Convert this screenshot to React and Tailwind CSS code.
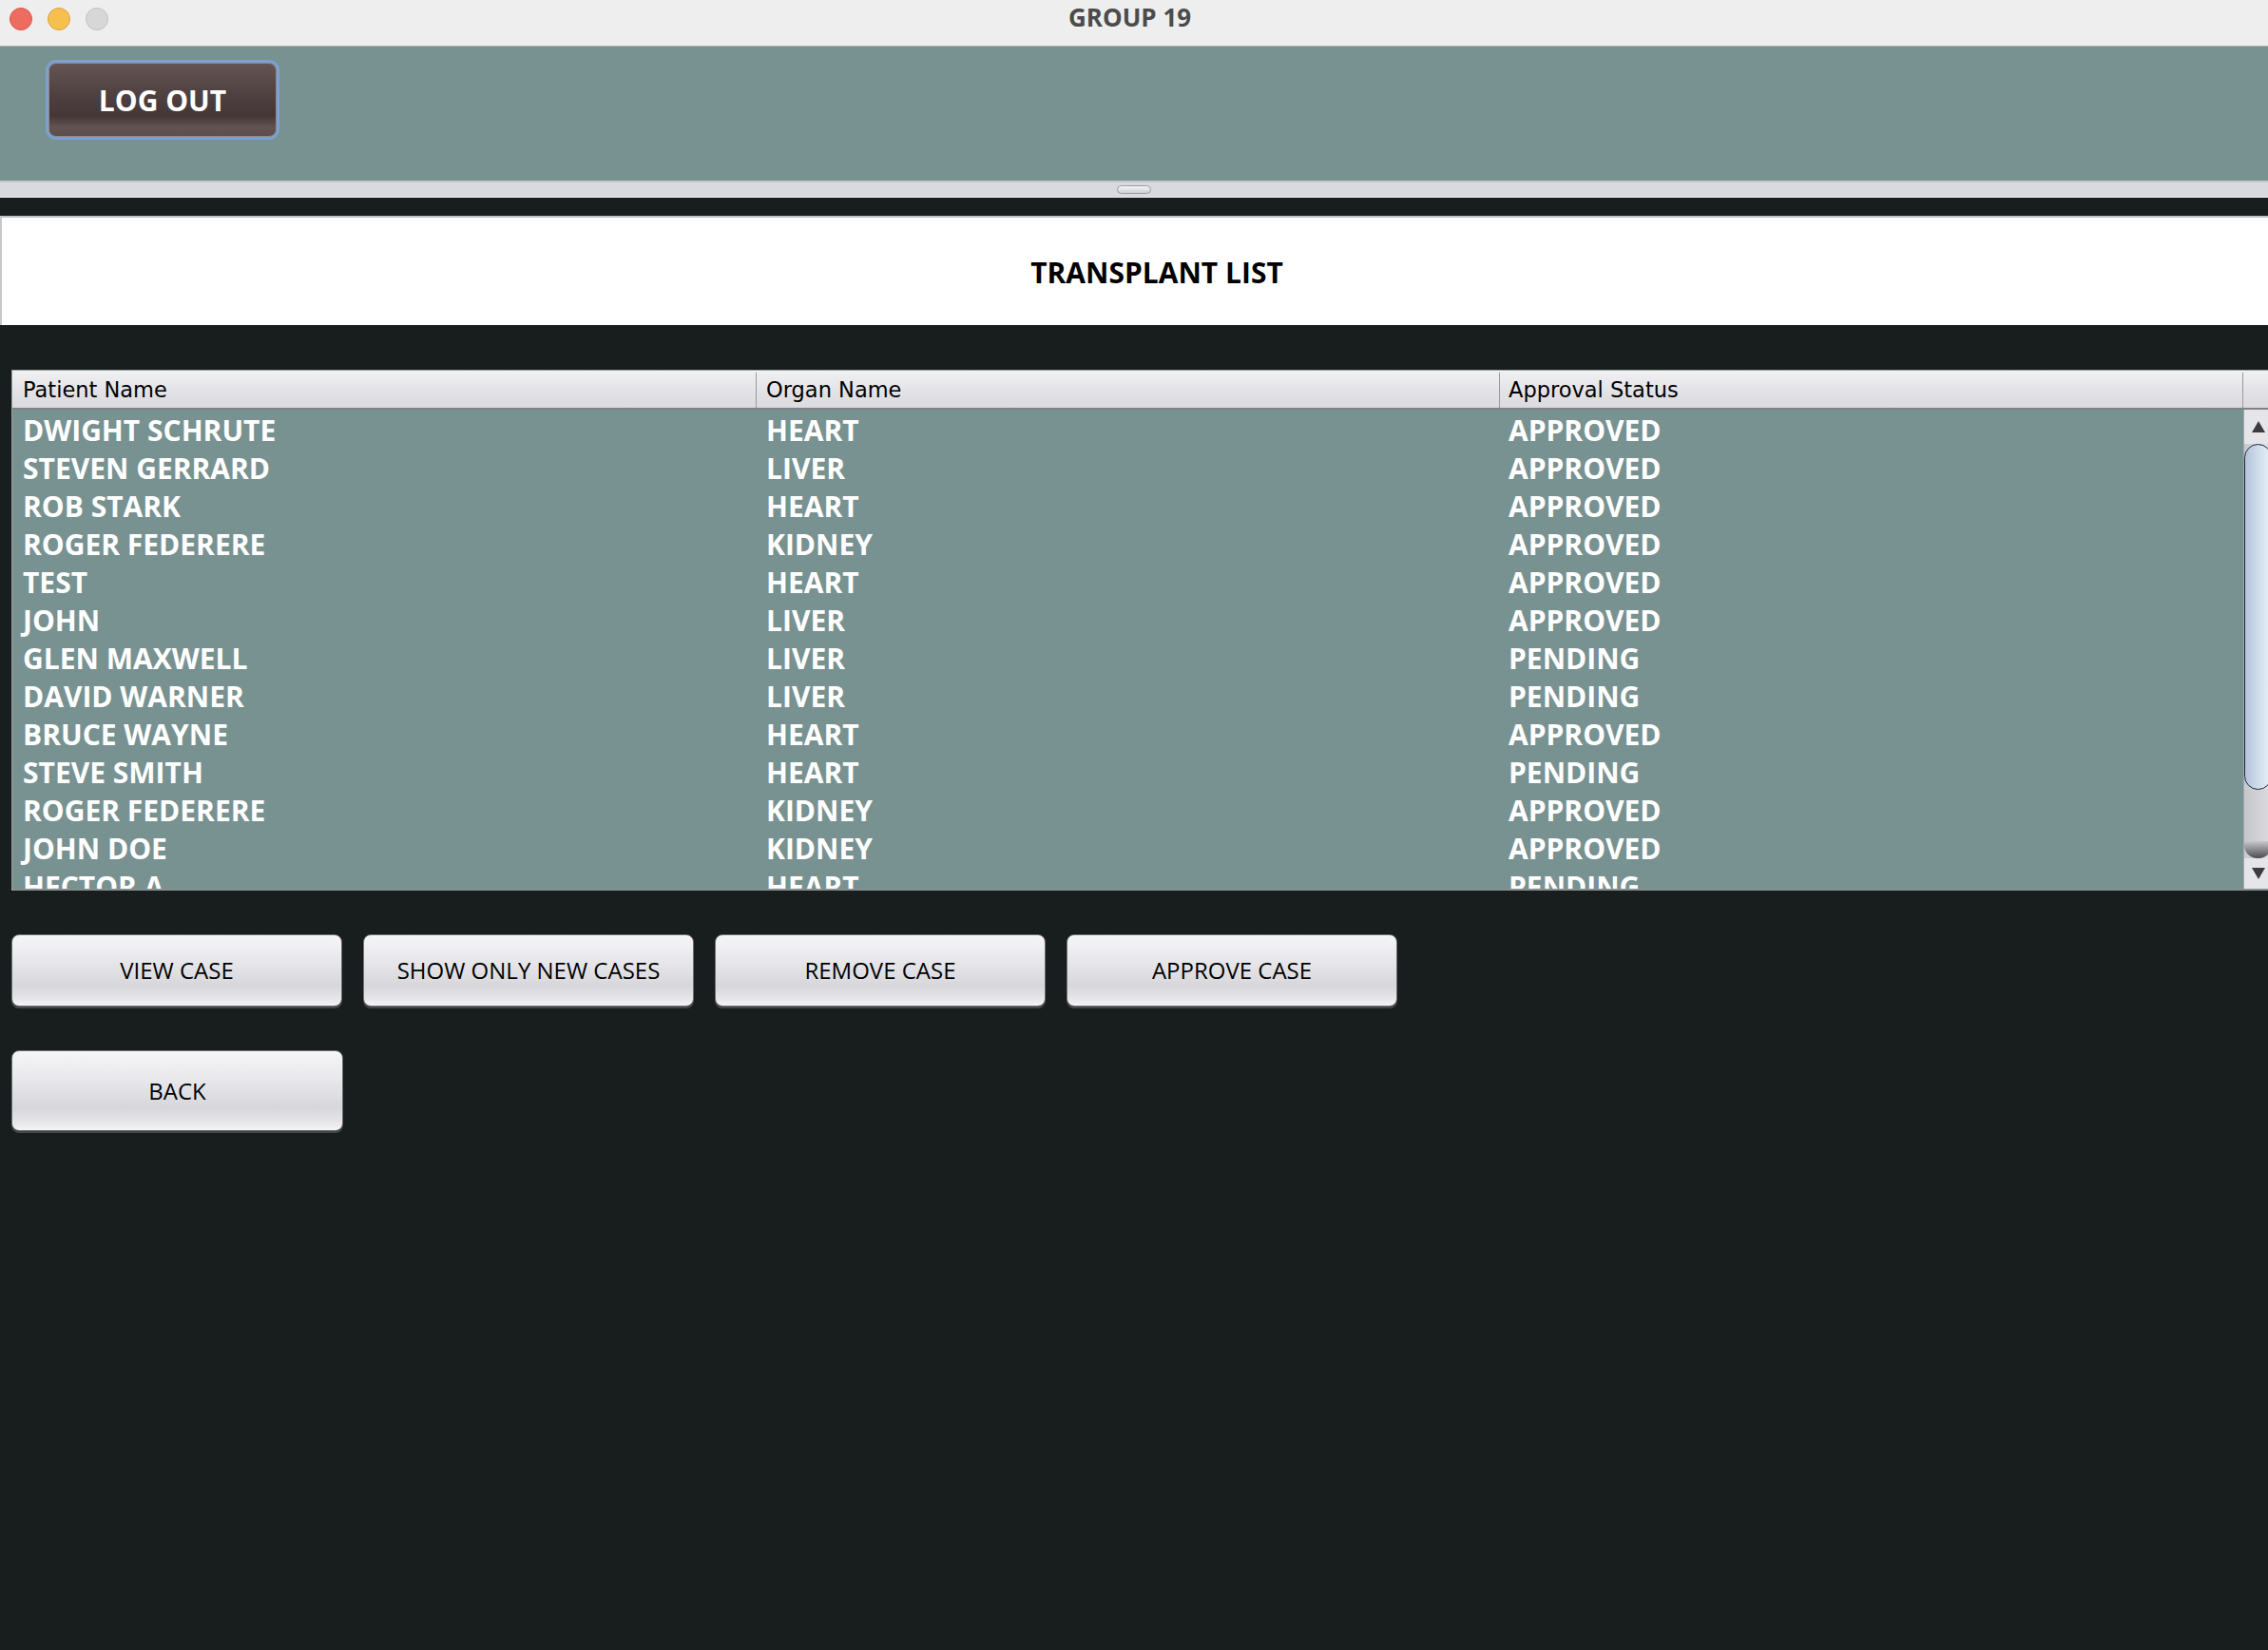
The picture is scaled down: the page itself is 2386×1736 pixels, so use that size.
import React from 'react';

const rows = [
  ['DWIGHT SCHRUTE', 'HEART', 'APPROVED'],
  ['STEVEN GERRARD', 'LIVER', 'APPROVED'],
  ['ROB STARK', 'HEART', 'APPROVED'],
  ['ROGER FEDERERE', 'KIDNEY', 'APPROVED'],
  ['TEST', 'HEART', 'APPROVED'],
  ['JOHN', 'LIVER', 'APPROVED'],
  ['GLEN MAXWELL', 'LIVER', 'PENDING'],
  ['DAVID WARNER', 'LIVER', 'PENDING'],
  ['BRUCE WAYNE', 'HEART', 'APPROVED'],
  ['STEVE SMITH', 'HEART', 'PENDING'],
  ['ROGER FEDERERE', 'KIDNEY', 'APPROVED'],
  ['JOHN DOE', 'KIDNEY', 'APPROVED'],
  ['HECTOR A', 'HEART', 'PENDING'],
];

const sans = "font-['Open_Sans',sans-serif]";

function AquaButton({ label, tall }) {
  return (
    <button
      className={`${tall ? 'h-[85px] w-[349px]' : 'h-[76px] w-[348px]'} rounded-[8px] border border-[#6c7073] bg-[linear-gradient(to_bottom,#f6f6f8_0%,#e6e6ea_40%,#d7d7db_72%,#e4e4e8_88%,#f4f4f6_100%)] shadow-[0_2px_0_#44494b] text-[24px] text-black ${sans} flex items-center justify-center`}
    >
      {label}
    </button>
  );
}

function Scrollbar() {
  return (
    <div className="w-[30px] shrink-0 border-l border-[#a4a8ac] bg-[linear-gradient(to_right,#c9c9cd,#e4e4e8)] flex flex-col">
      <div className="h-[36px] flex items-center justify-center bg-[#e6e6ea]">
        <svg width="14" height="12" viewBox="0 0 14 12">
          <polygon points="7,0 14,12 0,12" fill="#3c3c3c" />
        </svg>
      </div>
      <div className="h-[364px] rounded-[15px] border-[1.5px] border-[#1c2a3e] bg-[linear-gradient(to_right,#b3c4da,#c9d8e8_40%,#e8f1fa)]" />
      <div className="flex-1 flex flex-col">
        <div className="flex-1 bg-[linear-gradient(to_right,#c6c6ca,#dcdce0)]" />
        <div className="h-[18px] rounded-b-[14px] bg-[linear-gradient(to_bottom,#c8c8cc,#4c4c50)]" />
      </div>
      <div className="h-[32px] flex items-center justify-center bg-[#e6e6ea]">
        <svg width="14" height="12" viewBox="0 0 14 12">
          <polygon points="0,0 14,0 7,12" fill="#3c3c3c" />
        </svg>
      </div>
    </div>
  );
}

export default function App() {
  return (
    <div className="w-[2386px] h-[1736px] overflow-hidden bg-[#181d1d] flex flex-col">
      {/* window title bar */}
      <div className="h-[49px] shrink-0 bg-[#eeeeee] border-b border-[#b2b4b6] flex items-start">
        <div className="mt-[8px] ml-[10px] flex gap-[16px]">
          <span className="w-[24px] h-[24px] rounded-full bg-[#ee6b5f] border border-[#d6564b]" />
          <span className="w-[24px] h-[24px] rounded-full bg-[#f6c04f] border border-[#d9a43f]" />
          <span className="w-[24px] h-[24px] rounded-full bg-[#d7d7d7] border border-[#c2c2c2]" />
        </div>
        <div className={`ml-[1010px] mt-[5px] text-[26px] leading-[26px] font-bold text-[#4b4b4b] ${sans}`}>
          GROUP 19
        </div>
      </div>

      {/* top panel */}
      <div className="h-[141px] shrink-0 bg-[#789292] pl-[48px] pt-[14px]">
        <button className="w-[246px] h-[84px] rounded-[11px] border-[3px] border-[#7ca0d2] p-0">
          <div
            className={`w-full h-full rounded-[8px] border border-[#8e8686] bg-[linear-gradient(to_bottom,#645454_0%,#4c3e3e_50%,#453737_72%,#635353_88%,#5c4c4c_100%)] flex items-center justify-center text-white text-[30px] font-bold ${sans}`}
          >
            LOG OUT
          </div>
        </button>
      </div>

      {/* split pane divider */}
      <div className="h-[18px] shrink-0 bg-[#d9dadf] border-t-[2px] border-t-[#c6c9cc] border-b border-b-[#eeeff1] flex items-center justify-center">
        <div className="w-[36px] h-[9px] rounded-full border border-[#9a9ca2] bg-[linear-gradient(to_bottom,#f6f6f8,#cdced2)]" />
      </div>

      <div className="h-[19px] shrink-0" />

      {/* heading panel */}
      <div className="h-[115px] shrink-0 bg-white border-t-[2px] border-t-[#c2c2c2] border-l-[2px] border-l-[#c8c8c8] flex items-center justify-center pl-[46px] pt-[2px]">
        <span className={`text-[30px] font-bold text-black ${sans}`}>TRANSPLANT LIST</span>
      </div>

      <div className="h-[47px] shrink-0" />

      {/* table */}
      <div className="ml-[12px] w-[2400px] shrink-0 border-l border-[#9ca0a2] flex flex-col">
        <div className="h-[42px] pt-[2px] flex border-t border-[#9aa0a4] border-b-[2px] border-b-[#7e8284] bg-[linear-gradient(to_bottom,#f1f1f4,#e2e2e6_60%,#dadadf)] font-['DejaVu_Sans',sans-serif] text-[22.5px] text-black">
          <div className="w-[783px] shrink-0 border-r border-[#9a9a9e] pl-[11px] flex items-center">Patient Name</div>
          <div className="w-[782px] shrink-0 border-r border-[#9a9a9e] pl-[10px] flex items-center">Organ Name</div>
          <div className="w-[782px] shrink-0 border-r border-[#9a9a9e] pl-[9px] flex items-center">Approval Status</div>
          <div className="flex-1" />
        </div>
        <div className="h-[506px] flex border-b-[2px] border-b-[#8a9090]">
          <div className="w-[2347px] shrink-0 overflow-hidden bg-[#789292]">
            {rows.map(([name, organ, status], i) => (
              <div key={i} className={`h-[40px] pt-[4px] flex text-white text-[30px] leading-[36px] font-bold ${sans}`}>
                <div className="w-[783px] shrink-0 pl-[11px]">{name}</div>
                <div className="w-[782px] shrink-0 pl-[10px]">{organ}</div>
                <div className="w-[782px] shrink-0 pl-[9px]">{status}</div>
              </div>
            ))}
          </div>
          <Scrollbar />
        </div>
      </div>

      {/* actions */}
      <div className="mt-[46px] pl-[12px] flex gap-[22px]">
        <AquaButton label="VIEW CASE" />
        <AquaButton label="SHOW ONLY NEW CASES" />
        <AquaButton label="REMOVE CASE" />
        <AquaButton label="APPROVE CASE" />
      </div>
      <div className="mt-[46px] pl-[12px] flex">
        <AquaButton label="BACK" tall />
      </div>
    </div>
  );
}
